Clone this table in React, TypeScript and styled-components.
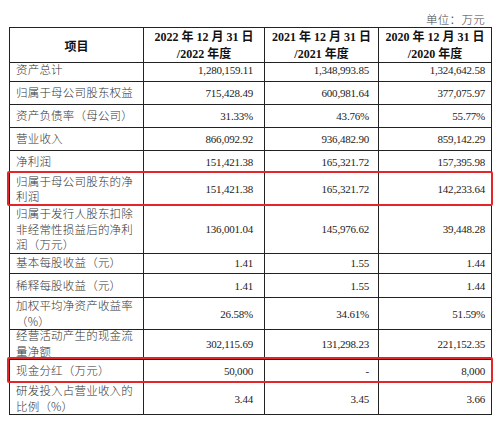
import React from "react";
import styled, { createGlobalStyle } from "styled-components";

const Global = createGlobalStyle`
  html, body { margin: 0; padding: 0; background: #ffffff; }
  body { font-family: "Liberation Serif", "Noto Sans CJK SC", serif; color: #222; }
`;

const Page = styled.div`
  width: 500px;
  height: 422px;
  padding: 12px 9px 0 9px;
  box-sizing: border-box;
  display: flex;
  flex-direction: column;
`;

const Unit = styled.div`
  height: 15px;
  line-height: 15px;
  text-align: right;
  padding-right: 6px;
  font-size: 11.5px;
  letter-spacing: 0.3px;
  color: #444;
  font-family: "Noto Sans CJK SC", sans-serif;
  font-weight: 300;
`;

const Table = styled.div`
  display: flex;
  flex-direction: column;
  border-top: 1px solid #222;
  border-left: 1px solid #222;
  width: 483px;
  box-sizing: border-box;
`;

const COLS = "134px 121px 114px 113px";

const Row = styled.div<{ $h: number; $hl?: boolean }>`
  position: relative;
  display: grid;
  grid-template-columns: ${COLS};
  height: ${(p) => p.$h}px;
  &::after {
    content: "";
    display: ${(p) => (p.$hl ? "block" : "none")};
    position: absolute;
    top: -2px;
    bottom: 0;
    left: -3px;
    right: -1px;
    border: 2px solid #e4262b;
    border-radius: 2px;
    pointer-events: none;
  }
`;

const Cell = styled.div`
  box-sizing: border-box;
  border-right: 1px solid #222;
  border-bottom: 1px solid #222;
  display: flex;
  align-items: center;
`;

const LabelCell = styled(Cell)`
  padding-left: 6px;
  font-family: "Noto Sans CJK SC", sans-serif;
  font-weight: 300;
  font-size: 11.5px;
  letter-spacing: 0.2px;
  line-height: 15.5px;
  color: #333;
`;

const HeadCell = styled(Cell)`
  justify-content: center;
  text-align: center;
  font-weight: bold;
  font-size: 12px;
  line-height: 15px;
  color: #111;
`;

const NumCell = styled(Cell)<{ $pr: number }>`
  justify-content: flex-end;
  padding-right: ${(p) => p.$pr}px;
  font-family: "Liberation Serif", serif;
  font-size: 11px;
  letter-spacing: -0.2px;
  color: #222;
`;

const Cjk = styled.span`
  font-family: "Noto Sans CJK SC", sans-serif;
  font-weight: bold;
`;

const Lines = styled.div`
  display: flex;
  flex-direction: column;
`;

type RowData = { label: string[]; vals: [string, string, string]; h: number; hl?: boolean };

const rows: RowData[] = [
  { label: ["资产总计"], vals: ["1,280,159.11", "1,348,993.85", "1,324,642.58"], h: 23 },
  { label: ["归属于母公司股东权益"], vals: ["715,428.49", "600,981.64", "377,075.97"], h: 23 },
  { label: ["资产负债率（母公司）"], vals: ["31.33%", "43.76%", "55.77%"], h: 23 },
  { label: ["营业收入"], vals: ["866,092.92", "936,482.90", "859,142.29"], h: 23 },
  { label: ["净利润"], vals: ["151,421.38", "165,321.72", "157,395.98"], h: 22 },
  { label: ["归属于母公司股东的净", "利润"], vals: ["151,421.38", "165,321.72", "142,233.64"], h: 33, hl: true },
  { label: ["归属于发行人股东扣除", "非经常性损益后的净利", "润（万元）"], vals: ["136,001.04", "145,976.62", "39,448.28"], h: 47 },
  { label: ["基本每股收益（元）"], vals: ["1.41", "1.55", "1.44"], h: 21 },
  { label: ["稀释每股收益（元）"], vals: ["1.41", "1.55", "1.44"], h: 24 },
  { label: ["加权平均净资产收益率", "（%）"], vals: ["26.58%", "34.61%", "51.59%"], h: 30 },
  { label: ["经营活动产生的现金流", "量净额"], vals: ["302,115.69", "131,298.23", "221,152.35"], h: 31 },
  { label: ["现金分红（万元）"], vals: ["50,000", "-", "8,000"], h: 24, hl: true },
  { label: ["研发投入占营业收入的", "比例（%）"], vals: ["3.44", "3.45", "3.66"], h: 32 },
];

const pads = [11, 9, 6];

const heads: [string, string][] = [
  ["2022", "2022"],
  ["2021", "2021"],
  ["2020", "2020"],
];

export default function App() {
  return (
    <>
      <Global />
      <Page>
        <Unit>单位：万元</Unit>
        <Table>
          <Row $h={31}>
            <HeadCell>
              <Cjk>项目</Cjk>
            </HeadCell>
            {heads.map(([a, b]) => (
              <HeadCell key={a}>
                <Lines>
                  <span>
                    {a} <Cjk>年</Cjk> 12 <Cjk>月</Cjk> 31 <Cjk>日</Cjk>
                  </span>
                  <span>
                    /{b} <Cjk>年度</Cjk>
                  </span>
                </Lines>
              </HeadCell>
            ))}
          </Row>
          {rows.map((r) => (
            <Row key={r.label.join("")} $h={r.h} $hl={r.hl}>
              <LabelCell>
                <Lines>
                  {r.label.map((l) => (
                    <span key={l}>{l}</span>
                  ))}
                </Lines>
              </LabelCell>
              {r.vals.map((v, i) => (
                <NumCell key={i} $pr={pads[i]}>
                  {v}
                </NumCell>
              ))}
            </Row>
          ))}
        </Table>
      </Page>
    </>
  );
}
